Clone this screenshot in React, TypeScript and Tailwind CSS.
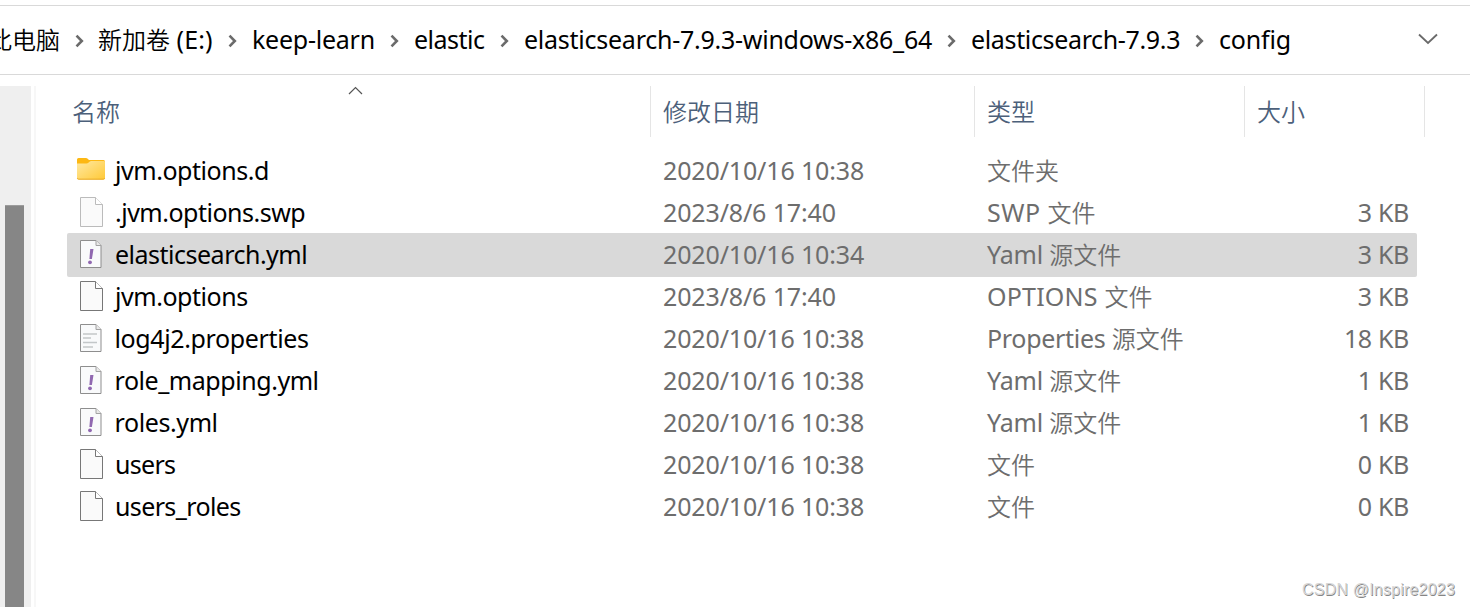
import type { ReactNode } from "react";

type IconKind = "folder" | "fileLight" | "file" | "yaml" | "text";

type Entry = {
  icon: IconKind;
  name: string;
  nameClass: string;
  date: string;
  type: ReactNode;
  size: string;
  selected?: boolean;
};

function Han({ children }: { children: string }) {
  return <span className="font-[350] text-[24px] tracking-normal">{children}</span>;
}

const entries: Entry[] = [
  { icon: "folder", name: "jvm.options.d", nameClass: "tracking-[-0.45px]", date: "2020/10/16 10:38", type: <Han>文件夹</Han>, size: "" },
  { icon: "fileLight", name: ".jvm.options.swp", nameClass: "tracking-[-0.5px]", date: "2023/8/6 17:40", type: <span className="tracking-[0.45px]">SWP <Han>文件</Han></span>, size: "3 KB" },
  { icon: "yaml", name: "elasticsearch.yml", nameClass: "tracking-[-0.5px]", date: "2020/10/16 10:34", type: <span className="tracking-[-0.2px]">Yaml <Han>源文件</Han></span>, size: "3 KB", selected: true },
  { icon: "file", name: "jvm.options", nameClass: "tracking-[-0.45px]", date: "2023/8/6 17:40", type: <span className="tracking-[0.2px]">OPTIONS <Han>文件</Han></span>, size: "3 KB" },
  { icon: "text", name: "log4j2.properties", nameClass: "-ml-[0.500px] tracking-[-0.37px]", date: "2020/10/16 10:38", type: <span className="tracking-[-0.3px]">Properties <Han>源文件</Han></span>, size: "18 KB" },
  { icon: "yaml", name: "role_mapping.yml", nameClass: "-ml-[0.500px] tracking-[-0.45px]", date: "2020/10/16 10:38", type: <span className="tracking-[-0.2px]">Yaml <Han>源文件</Han></span>, size: "1 KB" },
  { icon: "yaml", name: "roles.yml", nameClass: "-ml-[0.500px] tracking-[-0.4px]", date: "2020/10/16 10:38", type: <span className="tracking-[-0.2px]">Yaml <Han>源文件</Han></span>, size: "1 KB" },
  { icon: "file", name: "users", nameClass: "tracking-[-0.7px]", date: "2020/10/16 10:38", type: <Han>文件</Han>, size: "0 KB" },
  { icon: "file", name: "users_roles", nameClass: "tracking-[-0.62px]", date: "2020/10/16 10:38", type: <Han>文件</Han>, size: "0 KB" },
];

function Folder() {
  return (
    <svg width="30" height="30" viewBox="0 0 30 30" className="-mt-[2px] block">
      <defs>
        <linearGradient id="folderFront" x1="0" y1="0" x2="1" y2="1">
          <stop offset="0" stopColor="#ffe9a2" />
          <stop offset="1" stopColor="#ffc937" />
        </linearGradient>
      </defs>
      <path d="M1 5.500a1.500 1.500 0 0 1 1.500-1.500h7.500a2 2 0 0 1 1.400.6L13 6h14.500a1.500 1.500 0 0 1 1.500 1.500V20H1Z" fill="#fdb813" />
      <path d="M1 9.500h9.500a3 3 0 0 0 1.900-.7l1.400-1.300a2 2 0 0 1 1.300-.5h12.900a1 1 0 0 1 1 1V24a1.500 1.500 0 0 1-1.500 1.500h-25A1.500 1.500 0 0 1 1 24Z" fill="url(#folderFront)" />
      <path d="M1.300 24.300q.4.900 1.400.900h24.600q1 0 1.400-.9" fill="none" stroke="#e9a820" strokeWidth="1" />
    </svg>
  );
}

function Page({ stroke }: { stroke: string }) {
  return (
    <svg width="30" height="30" viewBox="0 0 30 30" className="block">
      <path d="M4.500.500h15l7 7v22h-22Z" fill="#fafafa" stroke={stroke} />
      <path d="M19.500.500v7h7" fill="#fff" stroke={stroke} />
    </svg>
  );
}

function SmallPage({ children }: { children: ReactNode }) {
  return (
    <svg width="30" height="30" viewBox="0 0 30 30" className="block">
      <path d="M4.500 1.500h15.500l5 5v22H4.500Z" fill="#f9fafb" stroke="#8e8e8e" />
      <path d="M20 1.500v5h5" fill="#e9e9e9" stroke="#a2a2a2" />
      {children}
    </svg>
  );
}

function Icon({ kind }: { kind: IconKind }) {
  if (kind === "folder") return <Folder />;
  if (kind === "fileLight") return <Page stroke="#bbbbbb" />;
  if (kind === "file") return <Page stroke="#777777" />;
  if (kind === "yaml")
    return (
      <SmallPage>
        <path d="M14.200 10h3.300l-1.600 10h-2.500Z" fill="#9068b0" />
        <circle cx="14" cy="23.300" r="1.900" fill="#9068b0" />
      </SmallPage>
    );
  return (
    <SmallPage>
      <path d="M7 11h14M7 15h8M7 19.500h14M7 24h10" stroke="#c3c7c9" strokeWidth="1.600" fill="none" />
    </SmallPage>
  );
}

const crumbs: { label: ReactNode; labelClass: string; gapClass: string }[] = [
  { label: <Han>此电脑</Han>, labelClass: "w-[87px]", gapClass: "w-[23px]" },
  { label: <><Han>新加卷</Han> (E:)</>, labelClass: "w-[130px] tracking-[0.1px]", gapClass: "w-[24px]" },
  { label: "keep-learn", labelClass: "w-[138px] tracking-[-0.25px]", gapClass: "w-[24px]" },
  { label: "elastic", labelClass: "w-[86px] tracking-[-0.5px]", gapClass: "w-[24px]" },
  { label: "elasticsearch-7.9.3-windows-x86_64", labelClass: "w-[423px] tracking-[-0.25px]", gapClass: "w-[24px]" },
  { label: "elasticsearch-7.9.3", labelClass: "w-[224px] tracking-[-0.35px]", gapClass: "w-[24px]" },
  { label: "config", labelClass: "w-[199px] tracking-[-0.2px]", gapClass: "" },
];

function Header({ children, className }: { children: string; className: string }) {
  return (
    <div className={`h-[51px] shrink-0 border-r border-[#e5e5e5] pt-[8px] text-[24px] leading-[36px] font-[350] text-[#4c607a] ${className}`}>
      {children}
    </div>
  );
}

export default function App() {
  return (
    <div className="relative flex h-[607px] w-[1470px] flex-col overflow-hidden bg-white font-['Noto_Sans','Noto_Sans_CJK_SC',sans-serif] text-[25px] whitespace-pre text-black">
      <div className="mt-[5px] flex h-[70px] shrink-0 items-center border-y border-[#d9d9d9]">
        <div className="-ml-[12px] flex items-center leading-[36px]">
          {crumbs.map((c, i) => (
            <div key={i} className="flex items-center">
              <span className={`-mt-[2px] h-[36px] shrink-0 ${c.labelClass}`}>{c.label}</span>
              {i < crumbs.length - 1 && (
                <span className={`mt-px shrink-0 ${c.gapClass}`}>
                  <svg width="9" height="14" viewBox="0 0 9 14" className="block">
                    <path d="M1.500 1.700 6.800 7l-5.300 5.300" fill="none" stroke="#6b6b6b" strokeWidth="2.600" />
                  </svg>
                </span>
              )}
            </div>
          ))}
          <svg width="20" height="12" viewBox="0 0 20 12" className="-mt-[3px] block">
            <path d="M1 1.500l9 8.500 9-8.500" fill="none" stroke="#6a6a6a" strokeWidth="1.800" />
          </svg>
        </div>
      </div>

      <div className="mt-[11px] flex grow">
        <div className="w-[31px] bg-[#efefef] pt-[119px] pl-[5px]">
          <div className="h-[402px] w-[19px] border-t border-[#9c9c9c] bg-[#868686]" />
        </div>
        <div className="ml-[3px] w-[2px] bg-[#f7f7f7]" />

        <div className="flex w-[1389px] flex-col">
          <div className="flex">
            <Header className="w-[615px] pl-[36px]">名称</Header>
            <Header className="w-[324px] pl-[12px]">修改日期</Header>
            <Header className="w-[270px] pl-[12px]">类型</Header>
            <Header className="w-[180px] pl-[12px]">大小</Header>
            <svg width="15" height="9" viewBox="0 0 15 9" className="absolute top-[86px] left-[348px]">
              <path d="M1 8l6.500-6.500L14 8" fill="none" stroke="#555" strokeWidth="1.200" />
            </svg>
          </div>

          <div className="mt-[12px] ml-[31px] w-[1350px]">
            {entries.map((e) => (
              <div key={e.name} className={`-mb-[2px] flex h-[44px] items-center rounded-[2px] pb-[2px] leading-[36px] text-[#6d6d6d] ${e.selected ? "bg-[#d9d9d9]" : ""}`}>
                <div className="w-[48px] pl-[9px]">
                  <Icon kind={e.icon} />
                </div>
                <div className="h-[36px] w-[548px] text-black">
                  <span className={e.nameClass}>{e.name}</span>
                </div>
                <div className="h-[36px] w-[324px] tracking-[-0.14px]">{e.date}</div>
                <div className="h-[36px] w-[280px]">{e.type}</div>
                <div className="h-[36px] w-[142px] text-right tracking-[-0.35px]">{e.size}</div>
              </div>
            ))}
          </div>
        </div>
      </div>

      <div className="absolute top-[580px] left-[1302px] font-['Liberation_Sans',sans-serif] text-[16px] leading-[20px] tracking-[0.2px] text-[#d6d6d6] [text-shadow:0.7px_0.7px_0.500px_#858585]">
        CSDN @Inspire2023
      </div>
    </div>
  );
}
